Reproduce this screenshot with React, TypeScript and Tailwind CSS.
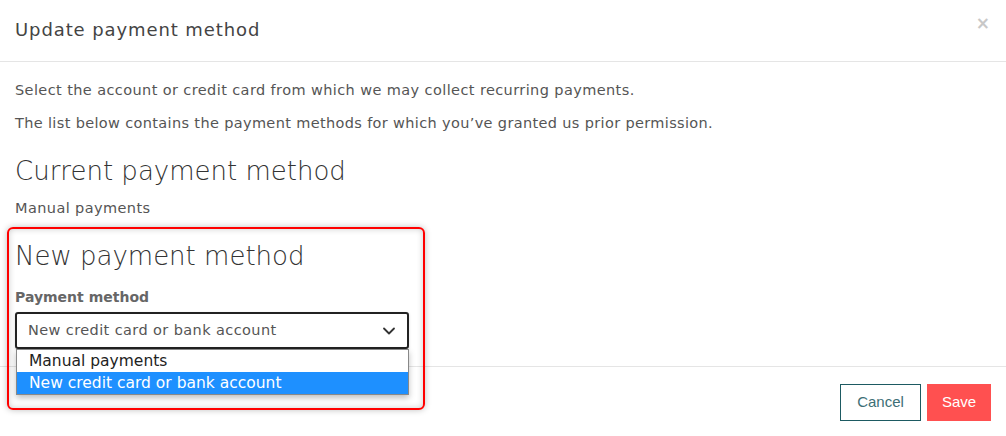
import { ChevronDown } from "lucide-react"

const font = { fontFamily: '"DejaVu Sans", sans-serif' }

export default function App() {
  return (
    <div className="relative w-[1006px] h-[436px] overflow-hidden bg-white text-[#444]" style={font}>
      {/* Header */}
      <div className="flex h-[62px] items-center justify-between border-b border-[#e5e5e5] pl-[15px] pr-[16px]">
        <h2 className="text-[18px] font-normal leading-[24px] tracking-[0.9px] text-[#444] -mt-[1px]">Update payment method</h2>
        <button className="-mt-[14px] text-[17px] font-bold leading-none text-[#c8c8c8]">×</button>
      </div>

      {/* Body */}
      <div className="px-[15px] pt-[18px]">
        <p className="text-[14.5px] leading-[20px] tracking-[0.4px] text-[#555]">
          Select the account or credit card from which we may collect recurring payments.
        </p>
        <p className="mt-[13px] text-[14.5px] leading-[20px] tracking-[0.35px] text-[#555]">
          The list below contains the payment methods for which you’ve granted us prior permission.
        </p>
        <h3 className="mt-[21px] text-[26px] font-light leading-[34px] text-[#333]">Current payment method</h3>
        <p className="mt-[10px] text-[14.5px] leading-[20px] tracking-[0.4px] text-[#555]">Manual payments</p>

        <h3 className="mt-[21px] text-[26px] font-light leading-[34px] text-[#333]">New payment method</h3>
        <label className="mt-[15px] block text-[14px] font-bold leading-[18px] text-[#666]">Payment method</label>
        <div className="mt-[6px] flex h-[37px] w-[394px] items-center justify-between rounded-[3px] border-2 border-[#222] pl-[11px] pr-[8px] shadow-[0_1px_3px_rgba(0,0,0,0.15)]">
          <span className="text-[14.5px] tracking-[0.4px] text-[#555]">New credit card or bank account</span>
          <ChevronDown className="h-[20px] w-[20px] text-[#333]" strokeWidth={2.2} />
        </div>
      </div>

      {/* Footer */}
      <div className="mt-[17px] flex justify-end gap-[6px] border-t border-[#e5e5e5] pr-[15px] pt-[17px]" style={{ fontFamily: '"Liberation Sans", sans-serif' }}>
        <button className="h-[37px] w-[81px] border border-[#1d5a62] text-[15px] text-[#3d6f76]">Cancel</button>
        <button className="h-[37px] w-[64px] bg-[#ff5050] text-[15px] text-white">Save</button>
      </div>

      {/* Open select list */}
      <div className="absolute left-[16px] top-[349px] w-[393px] border border-[#888] bg-white shadow-[0_3px_6px_rgba(0,0,0,0.25)]">
        <div className="h-[22px] pl-[12px] text-[15.5px] leading-[22px] text-[#222]">Manual payments</div>
        <div className="h-[22px] bg-[#1e90ff] pl-[12px] text-[15.5px] leading-[22px] text-white">New credit card or bank account</div>
      </div>

      {/* Highlight annotation */}
      <div className="pointer-events-none absolute left-[7px] top-[227px] h-[183px] w-[418px] rounded-[6px] border-2 border-[#ff0000] shadow-[0_0_6px_rgba(0,0,0,0.25),inset_0_0_6px_rgba(0,0,0,0.2)]" />
    </div>
  )
}
